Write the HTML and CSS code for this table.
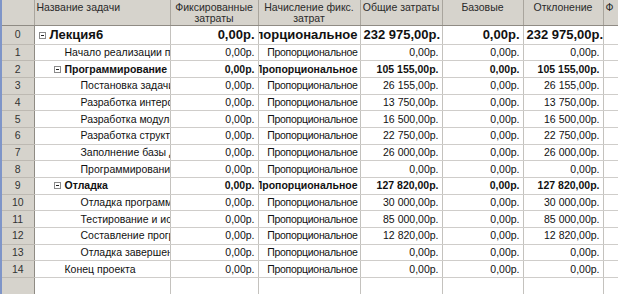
FILE: index.html
```html
<!DOCTYPE html>
<html lang="ru">
<head>
    <meta charset="UTF-8">
    <title>Лекция6 - затраты</title>
    <link rel="stylesheet" href="styles.css">
</head>
<body>
    <div class="sheet">
        <table class="grid">
            <colgroup>
                <col class="c-id">
                <col class="c-name">
                <col class="c-fixed">
                <col class="c-accrual">
                <col class="c-total">
                <col class="c-base">
                <col class="c-var">
                <col>
            </colgroup>
            <thead>
                <tr>
                    <th class="id"></th>
                    <th class="left">Название задачи</th>
                    <th>Фиксированные затраты</th>
                    <th>Начисление фикс. затрат</th>
                    <th>Общие затраты</th>
                    <th>Базовые</th>
                    <th>Отклонение</th>
                    <th class="left">Ф</th>
                </tr>
            </thead>
            <tbody>
                <tr class="summary top">
                    <td class="id">0</td>
                    <td class="name l0"><span class="toggle"></span>Лекция6</td>
                    <td class="num">0,00р.</td>
                    <td class="num acc"><span>Пропорциональное</span></td>
                    <td class="num">232 975,00р.</td>
                    <td class="num">0,00р.</td>
                    <td class="num">232 975,00р.</td>
                    <td></td>
                </tr>
                <tr>
                    <td class="id">1</td>
                    <td class="name l1">Начало реализации проекта</td>
                    <td class="num">0,00р.</td>
                    <td class="num acc"><span>Пропорциональное</span></td>
                    <td class="num">0,00р.</td>
                    <td class="num">0,00р.</td>
                    <td class="num">0,00р.</td>
                    <td></td>
                </tr>
                <tr class="summary">
                    <td class="id">2</td>
                    <td class="name l1"><span class="toggle"></span>Программирование</td>
                    <td class="num">0,00р.</td>
                    <td class="num acc"><span>Пропорциональное</span></td>
                    <td class="num">105 155,00р.</td>
                    <td class="num">0,00р.</td>
                    <td class="num">105 155,00р.</td>
                    <td></td>
                </tr>
                <tr>
                    <td class="id">3</td>
                    <td class="name l2">Постановка задачи</td>
                    <td class="num">0,00р.</td>
                    <td class="num acc"><span>Пропорциональное</span></td>
                    <td class="num">26 155,00р.</td>
                    <td class="num">0,00р.</td>
                    <td class="num">26 155,00р.</td>
                    <td></td>
                </tr>
                <tr>
                    <td class="id">4</td>
                    <td class="name l2">Разработка интерфейса</td>
                    <td class="num">0,00р.</td>
                    <td class="num acc"><span>Пропорциональное</span></td>
                    <td class="num">13 750,00р.</td>
                    <td class="num">0,00р.</td>
                    <td class="num">13 750,00р.</td>
                    <td></td>
                </tr>
                <tr>
                    <td class="id">5</td>
                    <td class="name l2">Разработка модулей</td>
                    <td class="num">0,00р.</td>
                    <td class="num acc"><span>Пропорциональное</span></td>
                    <td class="num">16 500,00р.</td>
                    <td class="num">0,00р.</td>
                    <td class="num">16 500,00р.</td>
                    <td></td>
                </tr>
                <tr>
                    <td class="id">6</td>
                    <td class="name l2">Разработка структуры</td>
                    <td class="num">0,00р.</td>
                    <td class="num acc"><span>Пропорциональное</span></td>
                    <td class="num">22 750,00р.</td>
                    <td class="num">0,00р.</td>
                    <td class="num">22 750,00р.</td>
                    <td></td>
                </tr>
                <tr>
                    <td class="id">7</td>
                    <td class="name l2">Заполнение базы данных</td>
                    <td class="num">0,00р.</td>
                    <td class="num acc"><span>Пропорциональное</span></td>
                    <td class="num">26 000,00р.</td>
                    <td class="num">0,00р.</td>
                    <td class="num">26 000,00р.</td>
                    <td></td>
                </tr>
                <tr>
                    <td class="id">8</td>
                    <td class="name l2">Программирование завершено</td>
                    <td class="num">0,00р.</td>
                    <td class="num acc"><span>Пропорциональное</span></td>
                    <td class="num">0,00р.</td>
                    <td class="num">0,00р.</td>
                    <td class="num">0,00р.</td>
                    <td></td>
                </tr>
                <tr class="summary">
                    <td class="id">9</td>
                    <td class="name l1"><span class="toggle"></span>Отладка</td>
                    <td class="num">0,00р.</td>
                    <td class="num acc"><span>Пропорциональное</span></td>
                    <td class="num">127 820,00р.</td>
                    <td class="num">0,00р.</td>
                    <td class="num">127 820,00р.</td>
                    <td></td>
                </tr>
                <tr>
                    <td class="id">10</td>
                    <td class="name l2">Отладка программы</td>
                    <td class="num">0,00р.</td>
                    <td class="num acc"><span>Пропорциональное</span></td>
                    <td class="num">30 000,00р.</td>
                    <td class="num">0,00р.</td>
                    <td class="num">30 000,00р.</td>
                    <td></td>
                </tr>
                <tr>
                    <td class="id">11</td>
                    <td class="name l2">Тестирование и испытания</td>
                    <td class="num">0,00р.</td>
                    <td class="num acc"><span>Пропорциональное</span></td>
                    <td class="num">85 000,00р.</td>
                    <td class="num">0,00р.</td>
                    <td class="num">85 000,00р.</td>
                    <td></td>
                </tr>
                <tr>
                    <td class="id">12</td>
                    <td class="name l2">Составление программной документации</td>
                    <td class="num">0,00р.</td>
                    <td class="num acc"><span>Пропорциональное</span></td>
                    <td class="num">12 820,00р.</td>
                    <td class="num">0,00р.</td>
                    <td class="num">12 820,00р.</td>
                    <td></td>
                </tr>
                <tr>
                    <td class="id">13</td>
                    <td class="name l2">Отладка завершена</td>
                    <td class="num">0,00р.</td>
                    <td class="num acc"><span>Пропорциональное</span></td>
                    <td class="num">0,00р.</td>
                    <td class="num">0,00р.</td>
                    <td class="num">0,00р.</td>
                    <td></td>
                </tr>
                <tr>
                    <td class="id">14</td>
                    <td class="name l1">Конец проекта</td>
                    <td class="num">0,00р.</td>
                    <td class="num acc"><span>Пропорциональное</span></td>
                    <td class="num">0,00р.</td>
                    <td class="num">0,00р.</td>
                    <td class="num">0,00р.</td>
                    <td></td>
                </tr>
                <tr class="empty">
                    <td class="id"></td>
                    <td></td>
                    <td></td>
                    <td></td>
                    <td></td>
                    <td></td>
                    <td></td>
                    <td></td>
                </tr>
            </tbody>
        </table>
    </div>
</body>
</html>
```

FILE: styles.css
```css
body {
    margin: 0;
    background: #fff;
    font-family: "Liberation Sans", Arial, sans-serif;
    font-size: 10.5px;
    color: #111;
    overflow: hidden;
}
.sheet {
    width: 618px;
    height: 294px;
    overflow: hidden;
    border-left: 2px solid #7f95c8;
    box-sizing: border-box;
}
.grid {
    width: 640px;
    table-layout: fixed;
    border-collapse: collapse;
}
.c-id { width: 32px; }
.c-name { width: 136px; }
.c-fixed { width: 88px; }
.c-accrual { width: 102px; }
.c-total { width: 82px; }
.c-base { width: 81px; }
.c-var { width: 80px; }

th {
    height: 23px;
    padding: 2px 2px 0;
    background: #d6d3cc;
    color: #2a2a2a;
    font-weight: normal;
    line-height: 11px;
    text-align: center;
    vertical-align: top;
    border-right: 1px solid #a9a59d;
    border-bottom: 1px solid #8f8b84;
}
th.left {
    text-align: left;
}
td {
    height: 15.7px;
    padding: 0 3px;
    white-space: nowrap;
    overflow: hidden;
    border-right: 1px solid #c4c2be;
    border-bottom: 1px solid #cfcdca;
    line-height: 15px;
}
td.id {
    background: #d6d3cc;
    color: #333;
    text-align: center;
    border-right: 1px solid #8f8b84;
    border-bottom: 1px solid #bdb9b2;
}
td.num {
    text-align: right;
}
td.acc {
    padding-right: 2px;
}
td.acc span {
    float: right;
    letter-spacing: -0.3px;
}
.summary td.acc span {
    letter-spacing: 0;
}
.l0 { padding-left: 14px; }
.l1 { padding-left: 30px; }
.l2 { padding-left: 46px; }

.toggle {
    display: inline-block;
    width: 7px;
    height: 7px;
    margin-left: -11px;
    margin-right: 4px;
    border: 1px solid #8a8a8a;
    background: #fff;
    box-sizing: border-box;
    position: relative;
    vertical-align: 0;
}
.toggle::after {
    content: "";
    position: absolute;
    left: 1px;
    top: 2px;
    width: 3px;
    height: 1px;
    background: #222;
}
.summary td {
    font-weight: bold;
}
.summary td.id {
    font-weight: normal;
}
.top td {
    font-size: 13px;
    height: 17.5px;
}
.top td.id {
    font-size: 10.5px;
}
.top .toggle {
    margin-left: -10px;
    margin-right: 4px;
}
.empty td {
    height: 17px;
}
```
